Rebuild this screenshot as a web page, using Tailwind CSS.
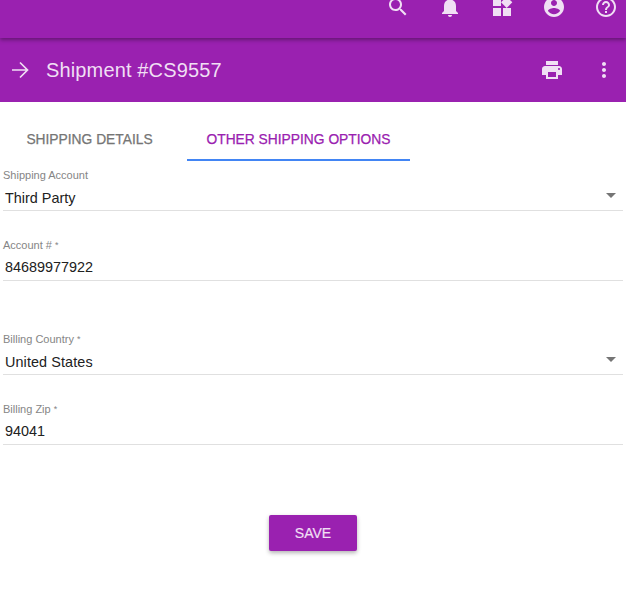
<!DOCTYPE html>
<html lang="en">
<head>
    <meta charset="UTF-8">
    <title>Shipment #CS9557</title>
    <script src="https://cdn.jsdelivr.net/npm/@tailwindcss/browser@4"></script>
</head>
<body class="bg-white min-h-screen font-['Liberation_Sans',Arial,sans-serif] overflow-hidden">

    <!-- Top toolbar -->
    <div class="relative z-10 h-[38px] bg-[#9a21b0] overflow-hidden shadow-[0_2px_4px_rgba(0,0,0,0.35)]">
        <div class="flex justify-end items-end h-[19px] pr-[8px] gap-[28px] text-[#f0dff4]">
            <svg class="w-6 h-6 shrink-0" viewBox="0 0 24 24" fill="currentColor"><path d="M15.5 14h-.79l-.28-.27C15.41 12.59 16 11.11 16 9.5 16 5.91 13.09 3 9.5 3S3 5.91 3 9.5 5.91 16 9.5 16c1.61 0 3.09-.59 4.23-1.57l.27.28v.79l5 4.99L20.49 19l-4.99-5zm-6 0C7.01 14 5 11.99 5 9.5S7.01 5 9.5 5 14 7.01 14 9.5 11.99 14 9.5 14z"/></svg>
            <svg class="w-6 h-6 shrink-0" viewBox="0 0 24 24" fill="currentColor"><path d="M12 22c1.1 0 2-.9 2-2h-4c0 1.1.89 2 2 2zm6-6v-5c0-3.07-1.64-5.64-4.5-6.32V4c0-.83-.67-1.5-1.5-1.5s-1.5.67-1.5 1.5v.68C7.63 5.36 6 7.92 6 11v5l-2 2v1h16v-1l-2-2z"/></svg>
            <svg class="w-6 h-6 shrink-0" viewBox="0 0 24 24" fill="currentColor"><path d="M13 13v8h8v-8h-8zM3 21h8v-8H3v8zM3 3v8h8V3H3zm13.66-1.31L11 7.34 16.66 13l5.66-5.66-5.66-5.65z"/></svg>
            <svg class="w-6 h-6 shrink-0" viewBox="0 0 24 24" fill="currentColor"><path d="M12 2C6.48 2 2 6.48 2 12s4.48 10 10 10 10-4.48 10-10S17.52 2 12 2zm0 3c1.66 0 3 1.34 3 3s-1.34 3-3 3-3-1.34-3-3 1.34-3 3-3zm0 14.2c-2.5 0-4.71-1.28-6-3.22.03-1.99 4-3.08 6-3.08 1.99 0 5.97 1.09 6 3.08-1.29 1.94-3.5 3.22-6 3.22z"/></svg>
            <svg class="w-6 h-6 shrink-0" viewBox="0 0 24 24" fill="currentColor"><path d="M11 18h2v-2h-2v2zm1-16C6.48 2 2 6.48 2 12s4.48 10 10 10 10-4.48 10-10S17.52 2 12 2zm0 18c-4.41 0-8-3.59-8-8s3.59-8 8-8 8 3.59 8 8-3.59 8-8 8zm0-14c-2.21 0-4 1.79-4 4h2c0-1.1.9-2 2-2s2 .9 2 2c0 2-3 1.75-3 5h2c0-2.25 3-2.5 3-5 0-2.21-1.79-4-4-4z"/></svg>
        </div>
    </div>

    <!-- Shipment header -->
    <div class="h-[64px] bg-[#9a21b0] flex items-center text-[#f0dff4]">
        <svg class="w-6 h-6 ml-[8px] shrink-0" viewBox="0 0 24 24" fill="none" stroke="currentColor" stroke-width="1.7"><path d="M4 12h15.5M12 4.5l7.5 7.5-7.5 7.5"/></svg>
        <h1 class="ml-[14px] text-[20px] font-normal tracking-[0.14px]">Shipment #CS9557</h1>
        <div class="ml-auto flex items-center gap-[28px] pr-[10px]">
            <svg class="w-6 h-6" viewBox="0 0 24 24" fill="currentColor"><path d="M19 8H5c-1.66 0-3 1.34-3 3v6h4v4h12v-4h4v-6c0-1.66-1.34-3-3-3zm-3 11H8v-5h8v5zm3-7c-.55 0-1-.45-1-1s.45-1 1-1 1 .45 1 1-.45 1-1 1zm-1-9H6v4h12V3z"/></svg>
            <svg class="w-6 h-6" viewBox="0 0 24 24" fill="currentColor"><path d="M12 8c1.1 0 2-.9 2-2s-.9-2-2-2-2 .9-2 2 .9 2 2 2zm0 2c-1.1 0-2 .9-2 2s.9 2 2 2 2-.9 2-2-.9-2-2-2zm0 6c-1.1 0-2 .9-2 2s.9 2 2 2 2-.9 2-2-.9-2-2-2z"/></svg>
        </div>
    </div>

    <!-- Tabs -->
    <div class="flex h-[59px] text-[13.8px] font-medium [-webkit-text-stroke:0.25px]">
        <button class="w-[179px] pt-[20px] pb-[2px] text-[#757575]">SHIPPING DETAILS</button>
        <button class="ml-[8px] w-[223px] pt-[20px] text-[#9a21b0] border-b-2 border-[#4285f4]">OTHER SHIPPING OPTIONS</button>
    </div>

    <!-- Form -->
    <form class="px-[3px]">
        <div class="h-[43px] mt-[7px] border-b border-[#e0e0e0] relative">
            <label class="block text-[11px] leading-[14px] text-[#858585]">Shipping Account</label>
            <div class="mt-[7px] pl-[2px] text-[14.4px] leading-[18px] text-[#212121]">Third Party</div>
            <span class="absolute right-[7px] top-[25px] w-0 h-0 border-x-[5px] border-x-transparent border-t-[5px] border-t-[#757575]"></span>
        </div>
        <div class="h-[43px] mt-[27px] border-b border-[#e0e0e0]">
            <label class="block text-[11px] leading-[14px] text-[#858585]">Account # <span class="text-[9px] align-top">*</span></label>
            <div class="mt-[6px] pl-[2px] text-[14.4px] leading-[18px] text-[#212121]">84689977922</div>
        </div>
        <div class="h-[43px] mt-[51px] border-b border-[#e0e0e0] relative">
            <label class="block text-[11px] leading-[14px] text-[#858585]">Billing Country <span class="text-[9px] align-top">*</span></label>
            <div class="mt-[7px] pl-[2px] text-[14.4px] leading-[18px] tracking-[0.1px] text-[#212121]">United States</div>
            <span class="absolute right-[7px] top-[25px] w-0 h-0 border-x-[5px] border-x-transparent border-t-[5px] border-t-[#757575]"></span>
        </div>
        <div class="h-[43px] mt-[27px] border-b border-[#e0e0e0]">
            <label class="block text-[11px] leading-[14px] text-[#858585]">Billing Zip <span class="text-[9px] align-top">*</span></label>
            <div class="mt-[6px] pl-[2px] text-[14.4px] leading-[18px] text-[#212121]">94041</div>
        </div>
        <div class="flex justify-center mt-[70px]">
            <button type="button" class="w-[88px] h-[36px] rounded-[2px] bg-[#9a21b0] text-[#f0dff4] text-[14px] font-medium [-webkit-text-stroke:0.2px] shadow-[0_2px_4px_rgba(0,0,0,0.3)]">SAVE</button>
        </div>
    </form>

</body>
</html>
